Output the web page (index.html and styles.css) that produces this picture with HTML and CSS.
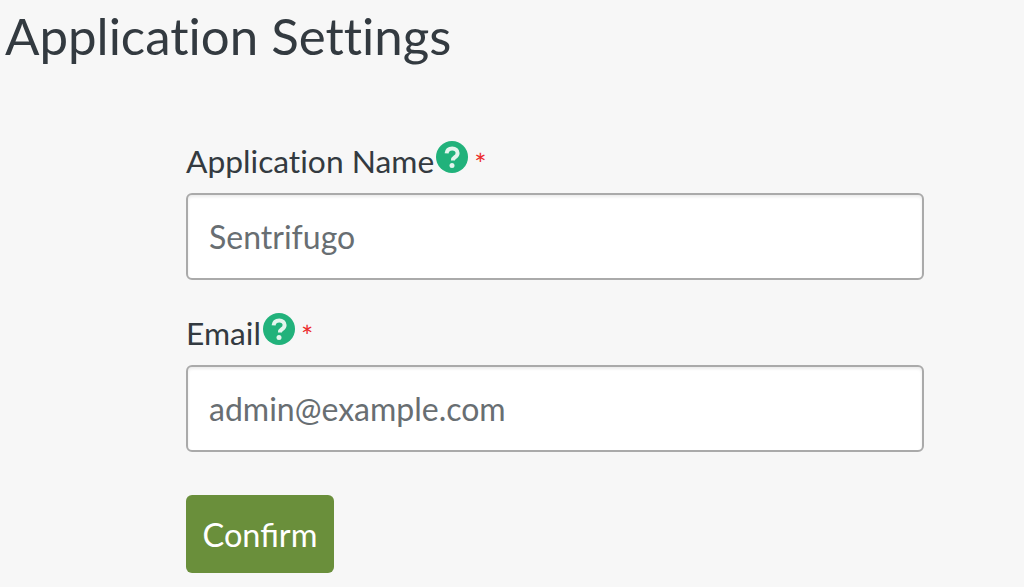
FILE: index.html
```html
<!DOCTYPE html>
<html lang="en">
<head>
    <meta charset="UTF-8">
    <meta name="viewport" content="width=device-width, initial-scale=1.0">
    <title>Application Settings</title>
    <link rel="stylesheet" href="styles.css">
</head>
<body>
    <h1>Application Settings</h1>
    <form class="settings-form">
        <div class="field">
            <label for="appName">Application Name<svg class="help" viewBox="0 0 32 32"><circle cx="16" cy="16" r="16" fill="#21b27b"/><path d="M10.600 12.400c.3-3.200 2.500-5 5.600-5 3.200 0 5.400 1.900 5.400 4.600 0 2-1 3.200-2.700 4.300-1.500 1-2 1.600-2 3.100" fill="none" stroke="#e4f5ee" stroke-width="4"/><circle cx="16" cy="24.500" r="2.500" fill="#e4f5ee"/></svg><span class="req">*</span></label>
            <input type="text" id="appName" placeholder="Sentrifugo">
        </div>
        <div class="field">
            <label for="email">Email<svg class="help" viewBox="0 0 32 32"><circle cx="16" cy="16" r="16" fill="#21b27b"/><path d="M10.600 12.400c.3-3.200 2.500-5 5.600-5 3.200 0 5.400 1.900 5.400 4.600 0 2-1 3.200-2.700 4.300-1.500 1-2 1.600-2 3.100" fill="none" stroke="#e4f5ee" stroke-width="4"/><circle cx="16" cy="24.500" r="2.500" fill="#e4f5ee"/></svg><span class="req">*</span></label>
            <input type="text" id="email" placeholder="admin@example.com">
        </div>
        <button type="button" class="confirm">Confirm</button>
    </form>
</body>
</html>
```

FILE: styles.css
```css
body {
    margin: 0;
    height: 587px;
    overflow: hidden;
    background-color: #f7f7f7;
    font-family: Lato, sans-serif;
    color: #333a40;
}

h1 {
    margin: 0;
    padding: 7px 0 0 5px;
    font-size: 51px;
    line-height: 58px;
    font-weight: 400;
    font-variant-ligatures: none;
}

.settings-form {
    width: 738px;
    margin: 78px 0 0 186px;
}

.field {
    margin-bottom: 35px;
}

label {
    display: flex;
    align-items: flex-start;
    height: 50px;
    font-size: 31.750px;
    line-height: 36px;
    font-variant-ligatures: none;
}

.help {
    width: 32px;
    height: 32px;
    margin: -2px 0 0 2px;
}

.req {
    margin-left: 6px;
    font-size: 29px;
    line-height: 42px;
    color: #ec2b2b;
}

input {
    display: block;
    box-sizing: border-box;
    width: 100%;
    height: 87px;
    padding: 0 21px;
    border: 2px solid #aaa;
    border-radius: 6px;
    background-color: #fff;
    box-shadow: inset 0 2px 3px rgba(0, 0, 0, 0.08);
    font-family: Lato, sans-serif;
    font-size: 32px;
}

input::placeholder {
    color: #686e72;
    opacity: 1;
}

.confirm {
    display: block;
    width: 148px;
    height: 78px;
    margin-top: 43px;
    padding: 0;
    background-color: #6a8f3b;
    color: #fff;
    border: none;
    border-radius: 6px;
    font-family: Lato, sans-serif;
    font-size: 32.500px;
}
```
